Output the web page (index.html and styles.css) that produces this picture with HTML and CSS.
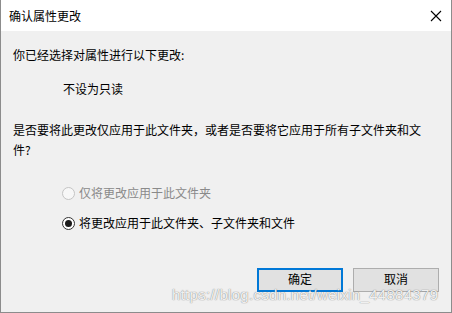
FILE: index.html
```html
<!DOCTYPE html>
<html lang="zh-CN">

<head>
    <meta charset="UTF-8" />
    <title>确认属性更改</title>
    <link rel="stylesheet" href="styles.css">
</head>

<body>
    <div class="dialog">
        <div class="titlebar">
            <span class="title">确认属性更改</span>
            <svg class="close" width="12" height="12" viewBox="0 0 12 12">
                <path d="M1 1 L11 11 M11 1 L1 11" stroke="#000" stroke-width="1.1" fill="none" />
            </svg>
        </div>

        <div class="content">
            <p class="line intro">你已经选择对属性进行以下更改:</p>
            <p class="line change">不设为只读</p>
            <p class="question">是否要将此更改仅应用于此文件夹，或者是否要将它应用于所有子文件夹和文件?</p>

            <div class="options">
                <label class="radio disabled">
                    <span class="dot"></span>仅将更改应用于此文件夹
                </label>
                <label class="radio checked">
                    <span class="dot"></span>将更改应用于此文件夹、子文件夹和文件
                </label>
            </div>

            <div class="buttons">
                <button class="btn default">确定</button>
                <button class="btn">取消</button>
            </div>
        </div>

        <div class="watermark">https://blog.csdn.net/weixin_44884379</div>
    </div>
</body>

</html>
```

FILE: styles.css
```css
body {
    margin: 0;
    padding: 0;
    font-family: "Noto Sans CJK SC", "Liberation Sans", sans-serif;
    font-size: 12px;
    color: #000;
}

.dialog {
    position: relative;
    width: 452px;
    height: 313px;
    box-sizing: border-box;
    border: 1px solid #8c8c8c;
    border-top: none;
    background-color: #f0f0f0;
    overflow: hidden;
}

.titlebar {
    height: 31px;
    background-color: #fff;
    display: flex;
    align-items: center;
    justify-content: space-between;
    padding: 0 9px 0 8px;
}

.title {
    line-height: 18px;
}

.content {
    padding: 15px 0 0 12px;
}

.line {
    margin: 0;
    line-height: 18px;
}

.change {
    margin-top: 16px;
    padding-left: 50px;
}

.question {
    margin: 22px 0 0;
    width: 414px;
    line-height: 20px;
}

.options {
    margin-top: 24px;
    padding-left: 49px;
    display: flex;
    flex-direction: column;
    gap: 12px;
}

.radio {
    display: flex;
    align-items: center;
    height: 18px;
    line-height: 18px;
}

.dot {
    width: 11px;
    height: 11px;
    border: 1px solid #333;
    border-radius: 50%;
    background-color: #fff;
    margin-right: 4px;
    display: flex;
    align-items: center;
    justify-content: center;
}

.radio.disabled {
    color: #8a8a8a;
}

.radio.disabled .dot {
    border-color: #c4c4c4;
    background-color: #f7f7f7;
}

.radio.checked .dot::after {
    content: "";
    width: 7px;
    height: 7px;
    border-radius: 50%;
    background-color: #1a1a1a;
}

.buttons {
    margin-top: 36px;
    padding-right: 12px;
    display: flex;
    justify-content: flex-end;
    gap: 10px;
}

.btn {
    width: 86px;
    height: 24px;
    font-family: inherit;
    font-size: 12px;
    line-height: 14px;
    background-color: #e1e1e1;
    border: 1px solid #adadad;
    padding: 0 0 2px;
    color: #000;
}

.btn.default {
    border: 2px solid #0078d7;
}

.watermark {
    position: absolute;
    left: 171px;
    top: 290px;
    font-family: "Liberation Sans", sans-serif;
    font-size: 15px;
    line-height: 9px;
    letter-spacing: 0.3px;
    color: rgba(255, 255, 255, 0.9);
    text-shadow: 0 0 1px rgba(110, 110, 110, 0.8), 0 0 1px rgba(110, 110, 110, 0.5);
    white-space: nowrap;
}
```
